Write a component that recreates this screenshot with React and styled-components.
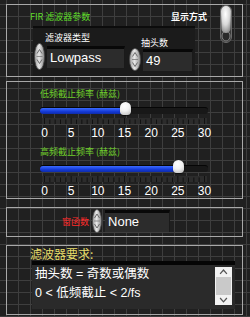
import React from "react";
import styled, { createGlobalStyle } from "styled-components";

const Global = createGlobalStyle`
  html, body { margin: 0; padding: 0; }
  body {
    background-color: #202020;
    background-image:
      linear-gradient(to right, #3e3e3e 1px, transparent 1px),
      linear-gradient(to bottom, #3e3e3e 1px, transparent 1px);
    background-size: 12px 12px;
    background-position: 6px 4px;
    font-family: "Liberation Sans", Arial, "Noto Sans CJK SC", sans-serif;
    overflow: hidden;
  }
`;

const Page = styled.div`
  width: 250px;
  height: 317px;
  box-sizing: border-box;
  padding: 4px 7px 0 6px;
  display: flex;
  flex-direction: column;
`;

const Frame = styled.div`
  border: 1px solid #a8a8a8;
  box-sizing: border-box;
  height: ${(p) => p.$h}px;
  margin-top: ${(p) => p.$mt || 0}px;
  display: flex;
  flex-direction: ${(p) => p.$dir || "column"};
`;

const CJK = `"Noto Sans CJK SC", "Liberation Sans", sans-serif`;

const Label = styled.div`
  font-family: ${CJK};
  font-size: ${(p) => p.$size || 9}px;
  line-height: ${(p) => p.$lh || 11}px;
  color: ${(p) => p.$color || "#ffffff"};
  white-space: nowrap;
  margin-top: ${(p) => p.$mt || 0}px;
  margin-left: ${(p) => p.$ml || 0}px;
  font-weight: ${(p) => p.$bold ? 700 : 400};
`;

const LeftCol = styled.div`
  flex: 1;
  display: flex;
  flex-direction: column;
`;

const Header = styled.div`
  display: flex;
  justify-content: space-between;
  padding: 6px 13px 0 23px;
`;

const ParamBox = styled.div`
  margin: 4px 0 0 26px;
  width: 162px;
  flex: 1;
  background: #1b1b1b;
  border-top: 2px solid #0c0c0c;
  box-sizing: border-box;
  display: flex;
  gap: 4px;
`;

const Group = styled.div`
  display: flex;
  flex-direction: column;
  margin-top: ${(p) => p.$mt}px;
`;

const ControlRow = styled.div`
  display: flex;
  align-items: center;
  gap: 2px;
  margin-left: ${(p) => p.$ml || 0}px;
`;

const Field = styled.div`
  width: ${(p) => p.$w}px;
  height: 22px;
  box-sizing: border-box;
  background: #2c2c2c;
  border-top: 3px solid #080808;
  border-right: 1px solid #1a1a1a;
  color: #ffffff;
  font-family: "Liberation Sans", Arial, sans-serif;
  font-size: 13px;
  line-height: 18px;
  padding-left: 3px;
`;

const ToggleCol = styled.div`
  width: 12px;
  margin: 0 10px 0 0;
`;

const SliderBlock = styled.div`
  display: flex;
  flex-direction: column;
  margin-left: 33px;
  margin-top: ${(p) => p.$mt}px;
`;

const Track = styled.div`
  position: relative;
  width: 168px;
  height: 7px;
  margin-top: 8px;
  background: #181818;
  border-top: 1px solid #060606;
  border-radius: 3px;
  box-sizing: border-box;
`;

const Fill = styled.div`
  height: 100%;
  border-radius: 3px 0 0 3px;
  background: linear-gradient(to bottom, #3b6bff, #1439d6 60%, #0f2ca8);
`;

const Thumb = styled.div`
  position: absolute;
  top: -6px;
  width: 11px;
  height: 13px;
  margin-left: -5px;
  border-radius: 6px 6px 4px 4px;
  background: radial-gradient(circle at 40% 30%, #ffffff 0%, #f2f2f2 45%, #b5b5b5 100%);
  box-shadow: 0 1px 1px rgba(0,0,0,0.6);
`;

const Scale = styled.svg`
  display: block;
  margin-top: 4px;
  width: 168px;
  height: 6px;
`;

const Numbers = styled.div`
  display: grid;
  grid-template-columns: repeat(7, 26.67px);
  margin-left: -8.8px;
  margin-top: 3px;
  font-family: "Liberation Sans", Arial, sans-serif;
  font-size: 12px;
  line-height: 12px;
  color: #ffffff;
  text-align: center;
`;

const WindowRow = styled.div`
  display: flex;
  align-items: center;
  padding: 1px 0 0 55px;
  gap: 3px;
`;

const ReqBox = styled.div`
  margin: 0 0 0 25px;
  width: 203px;
  height: 48px;
  box-sizing: border-box;
  background: #2a2a2a;
  border-top: 4px solid #050505;
  display: flex;
`;

const ReqText = styled.div`
  flex: 1;
  padding: 0 0 0 3px;
  font-family: "Liberation Sans", Arial, "Noto Sans CJK SC", sans-serif;
  font-size: 12.5px;
  line-height: 19px;
  color: #ffffff;
  white-space: nowrap;
`;

const Scrollbar = styled.div`
  width: 17px;
  height: 38px;
  margin: 2px 3px 0 0;
  background: #f2f2f2;
  display: flex;
  flex-direction: column;
  align-items: center;
  justify-content: space-between;
`;

const ScrollThumb = styled.div`
  width: 15px;
  height: 19px;
  background: #c9c9c9;
`;

const Spinner = ({ h = 27, w = 12 }) => (
  <svg width={w} height={h} viewBox={`0 0 ${w} ${h}`} style={{ flexShrink: 0 }}>
    <defs>
      <linearGradient id="spg" x1="0" y1="0" x2="1" y2="0">
        <stop offset="0" stopColor="#9a9a9a" />
        <stop offset="0.45" stopColor="#e8e8e8" />
        <stop offset="1" stopColor="#8a8a8a" />
      </linearGradient>
    </defs>
    <ellipse cx={w / 2} cy={h / 2} rx={w / 2 - 0.5} ry={h / 2 - 0.5} fill="url(#spg)" stroke="#4a4a4a" strokeWidth="0.8" />
    <path d={`M${w / 2 - 2.5} ${h / 2 - 3} L${w / 2} ${h / 2 - 7} L${w / 2 + 2.5} ${h / 2 - 3}`} fill="none" stroke="#6a6a6a" strokeWidth="1" />
    <line x1={w / 2 - 3} y1={h / 2} x2={w / 2 + 3} y2={h / 2} stroke="#7a7a7a" strokeWidth="0.8" />
    <path d={`M${w / 2 - 2.5} ${h / 2 + 3} L${w / 2} ${h / 2 + 7} L${w / 2 + 2.5} ${h / 2 + 3}`} fill="none" stroke="#6a6a6a" strokeWidth="1" />
  </svg>
);

const Toggle = () => (
  <svg width="12" height="38" viewBox="0 0 12 38">
    <defs>
      <radialGradient id="tg" cx="0.45" cy="0.3" r="0.8">
        <stop offset="0" stopColor="#ffffff" />
        <stop offset="0.5" stopColor="#d8d8d8" />
        <stop offset="1" stopColor="#7a7a7a" />
      </radialGradient>
    </defs>
    <rect x="0.5" y="0.5" width="11" height="37" rx="5.5" fill="#3a3a3a" stroke="#6a6a6a" />
    <ellipse cx="6" cy="31" rx="4" ry="5" fill="#2a2a2a" stroke="#9a9a9a" strokeWidth="0.8" />
    <path d="M1 6 A5 5 0 0 1 11 6 L10.5 24 A4.5 4 0 0 1 1.5 24 Z" fill="url(#tg)" />
  </svg>
);

const ScaleTicks = () => {
  const ticks = [];
  for (let i = 0; i <= 30; i++) {
    const x = 4.5 + (160 * i) / 30;
    const major = i % 5 === 0;
    ticks.push(<line key={i} x1={x} x2={x} y1={major ? 0 : 1.5} y2={6} stroke="#111" strokeWidth="1" />);
  }
  return (
    <Scale viewBox="0 0 168 6">
      <rect x="2" y="0" width="165" height="6" fill="#2c2c2c" />
      {ticks}
    </Scale>
  );
};

const Slider = ({ label, value, mt }) => {
  const pos = 4.5 + (160 * value) / 30;
  return (
    <SliderBlock $mt={mt}>
      <Label $color="#6fcf2a">{label}</Label>
      <Track>
        <Fill style={{ width: `${pos}px` }} />
        <Thumb style={{ left: `${pos}px` }} />
      </Track>
      <ScaleTicks />
      <Numbers>
        {[0, 5, 10, 15, 20, 25, 30].map((n) => (
          <span key={n}>{n}</span>
        ))}
      </Numbers>
    </SliderBlock>
  );
};

const Chevron = ({ up }) => (
  <svg width="9" height="6" viewBox="0 0 9 6" style={{ margin: "2px 0" }}>
    <path d={up ? "M1 5 L4.5 1 L8 5" : "M1 1 L4.5 5 L8 1"} fill="none" stroke="#555" strokeWidth="1.3" />
  </svg>
);

export default function App() {
  return (
    <>
      <Global />
      <Page>
        <Frame $h={73} $dir="row">
          <LeftCol>
            <Header>
              <Label $color="#5fdc2a">FIR 滤波器参数</Label>
              <Label $bold>显示方式</Label>
            </Header>
            <ParamBox>
              <Group $mt={4}>
                <Label $ml={12}>滤波器类型</Label>
                <ControlRow $ml={1}>
                  <Spinner h={27} w={11} />
                  <Field $w={78}>Lowpass</Field>
                </ControlRow>
              </Group>
              <Group $mt={9}>
                <Label $ml={12}>抽头数</Label>
                <ControlRow $ml={0}>
                  <Spinner h={23} w={12} />
                  <Field $w={50}>49</Field>
                </ControlRow>
              </Group>
            </ParamBox>
          </LeftCol>
          <ToggleCol>
            <Toggle />
          </ToggleCol>
        </Frame>

        <Frame $h={118} $mt={4}>
          <Slider label="低频截止频率 (赫兹)" value={15} mt={6} />
          <Slider label="高频截止频率 (赫兹)" value={25} mt={7} />
        </Frame>

        <Frame $h={30} $mt={8}>
          <WindowRow>
            <Label $color="#ff2a2a">窗函数</Label>
            <Spinner h={24} w={10} />
            <Field $w={65}>None</Field>
          </WindowRow>
        </Frame>

        <Frame $h={70} $mt={8}>
          <Label $size={12} $lh={14} $color="#e6dc6a" $ml={23} $mt={1}>滤波器要求:</Label>
          <ReqBox>
            <ReqText>
              抽头数 = 奇数或偶数
              <br />0 &lt; 低频截止 &lt; 2/fs
            </ReqText>
            <Scrollbar>
              <Chevron up />
              <ScrollThumb />
              <Chevron />
            </Scrollbar>
          </ReqBox>
        </Frame>
      </Page>
    </>
  );
}
